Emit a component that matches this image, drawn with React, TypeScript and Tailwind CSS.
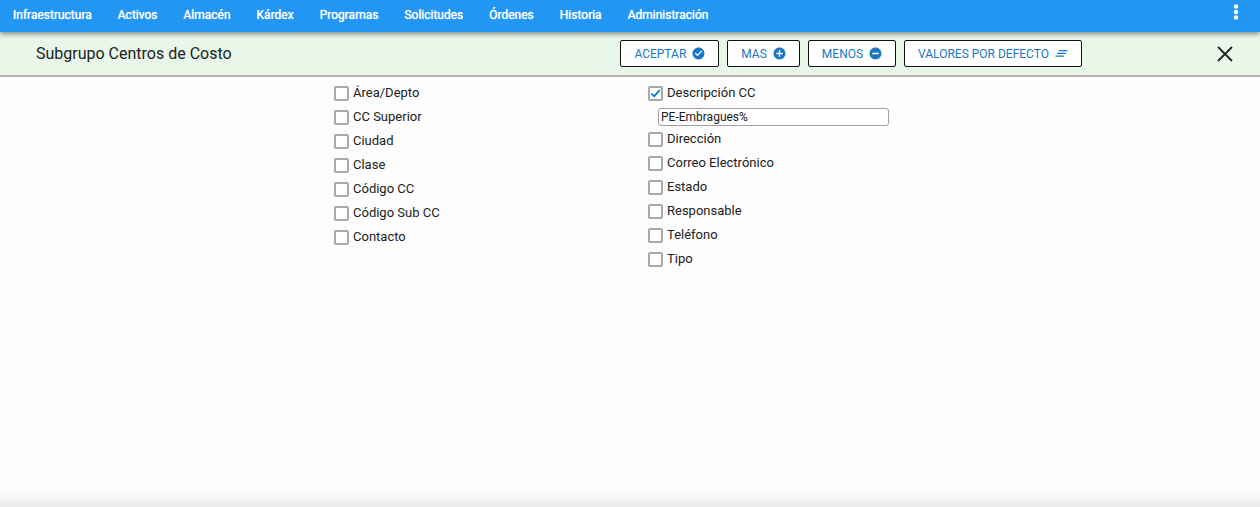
import { useState } from "react";

interface Field {
  id: string;
  label: string;
}

const MENU = [
  "Infraestructura",
  "Activos",
  "Almacén",
  "Kárdex",
  "Programas",
  "Solicitudes",
  "Órdenes",
  "Historia",
  "Administración",
];

const LEFT_FIELDS: Field[] = [
  { id: "area", label: "Área/Depto" },
  { id: "superior", label: "CC Superior" },
  { id: "ciudad", label: "Ciudad" },
  { id: "clase", label: "Clase" },
  { id: "codigo", label: "Código CC" },
  { id: "codigoSub", label: "Código Sub CC" },
  { id: "contacto", label: "Contacto" },
];

const RIGHT_FIELDS: Field[] = [
  { id: "descripcion", label: "Descripción CC" },
  { id: "direccion", label: "Dirección" },
  { id: "correo", label: "Correo Electrónico" },
  { id: "estado", label: "Estado" },
  { id: "responsable", label: "Responsable" },
  { id: "telefono", label: "Teléfono" },
  { id: "tipo", label: "Tipo" },
];

const ACTIONS = [
  { label: "ACEPTAR", icon: "check" },
  { label: "MAS", icon: "plus" },
  { label: "MENOS", icon: "minus" },
  { label: "VALORES POR DEFECTO", icon: "clear" },
];

const ICON_PATHS: Record<string, string> = {
  check:
    "M12 1C5.9 1 1 5.9 1 12s4.900 11 11 11 11-4.900 11-11S18.100 1 12 1zm-2 16l-5-5 1.600-1.600L10 13.800l7.400-7.400L19 8l-9 9z",
  plus: "M12 1C5.900 1 1 5.900 1 12s4.900 11 11 11 11-4.900 11-11S18.100 1 12 1zm6 12.300h-4.700V18h-2.600v-4.700H6v-2.600h4.700V6h2.600v4.700H18v2.600z",
  minus: "M12 1C5.900 1 1 5.900 1 12s4.900 11 11 11 11-4.900 11-11S18.100 1 12 1zm6 12.300H6v-2.600h12v2.600z",
  clear: "M4 13h16v-2.500H4V13zm-3 5h16v-2.500H1V18zM7 5.500V8h16V5.500H7z",
};

function ActionIcon({ name }: { name: string }) {
  return (
    <svg viewBox="0 0 24 24" className="size-[13px]" fill="currentColor" aria-hidden="true">
      <path d={ICON_PATHS[name]} />
    </svg>
  );
}

export default function App() {
  const [selected, setSelected] = useState<string[]>(["descripcion"]);
  const [descripcion, setDescripcion] = useState("PE-Embragues%");

  const toggle = (id: string) => {
    setSelected((prev) => (prev.includes(id) ? prev.filter((s) => s !== id) : [...prev, id]));
  };

  const renderField = (field: Field) => (
    <div key={field.id}>
      <label className="flex h-6 w-fit items-center gap-1 text-[13px] text-[#212121]">
        <span className="relative flex">
          <input
            type="checkbox"
            checked={selected.includes(field.id)}
            onChange={() => toggle(field.id)}
            className="peer size-[15px] appearance-none rounded-[2px] border-2 border-[#a9a9a9] bg-white"
          />
          <svg
            viewBox="0 0 15 15"
            className="pointer-events-none absolute inset-0 hidden size-[15px] peer-checked:block"
            fill="none"
            stroke="#0b76d1"
            strokeWidth="1.8"
            aria-hidden="true"
          >
            <path d="M3.300 7.600l2.900 2.600 5.500-6.200" />
          </svg>
        </span>
        {field.label}
      </label>
      {field.id === "descripcion" && selected.includes(field.id) && (
        <div className="flex h-[22px] pt-[3px] pl-2.5">
          <input
            type="text"
            aria-label="Valor de Descripción CC"
            value={descripcion}
            onChange={(e) => setDescripcion(e.target.value)}
            className="h-[18px] w-[231px] rounded-[3px] border border-[#a0a0a0] bg-white px-0.5 text-xs text-[#212121]"
          />
        </div>
      )}
    </div>
  );

  return (
    <div className="flex min-h-screen flex-col bg-[#fdfdfd] font-[Roboto,sans-serif]">
      {/* Main menu */}
      <header className="relative flex h-8 items-center justify-between bg-[#2196f3] pr-4 pl-[13px] shadow-[0_2px_5px_rgba(0,0,0,0.45)]">
        <nav className="flex gap-[26px] pb-0.5">
          {MENU.map((item) => (
            <a key={item} href="#" className="text-xs text-white [text-shadow:0_0_1px_#fff]">
              {item}
            </a>
          ))}
        </nav>
        <button type="button" aria-label="Más opciones" className="flex pb-2 text-white">
          <svg viewBox="0 0 16 18" className="h-[18px] w-4" fill="currentColor" aria-hidden="true">
            <circle cx="8" cy="3.5" r="2.2" />
            <circle cx="8" cy="9" r="2.2" />
            <circle cx="8" cy="14.5" r="2.2" />
          </svg>
        </button>
      </header>

      {/* Title and actions */}
      <div className="flex h-[45px] items-center border-b-2 border-[#b9b0ae] bg-[#e8f7ea] pr-[27px] pl-9">
        <h1 className="flex-1 text-base text-[#212121]">Subgrupo Centros de Costo</h1>
        <div className="flex gap-2">
          {ACTIONS.map((action) => (
            <button
              key={action.label}
              type="button"
              className="flex h-[27px] items-center gap-1.5 rounded-[2px] border border-[#111] bg-white px-[13px] text-xs text-[#1976c5]"
            >
              {action.label}
              <ActionIcon name={action.icon} />
            </button>
          ))}
        </div>
        <div className="flex w-[151px] justify-end">
          <button type="button" aria-label="Cerrar" className="text-[#212121]">
            <svg viewBox="0 0 16 16" className="size-4" fill="none" stroke="currentColor" strokeWidth="1.8" aria-hidden="true">
              <path d="M1 1l14 14M15 1L1 15" />
            </svg>
          </button>
        </div>
      </div>

      {/* Filter fields */}
      <main className="mx-auto grid w-1/2 flex-1 grid-cols-2 content-start pt-1">
        <div className="pl-[19px]">{LEFT_FIELDS.map(renderField)}</div>
        <div className="pl-[18px]">{RIGHT_FIELDS.map(renderField)}</div>
      </main>

      <footer className="h-5 bg-linear-to-t from-[#eaeaea] via-[#f7f7f7] to-[#fdfdfd]" />
    </div>
  );
}
